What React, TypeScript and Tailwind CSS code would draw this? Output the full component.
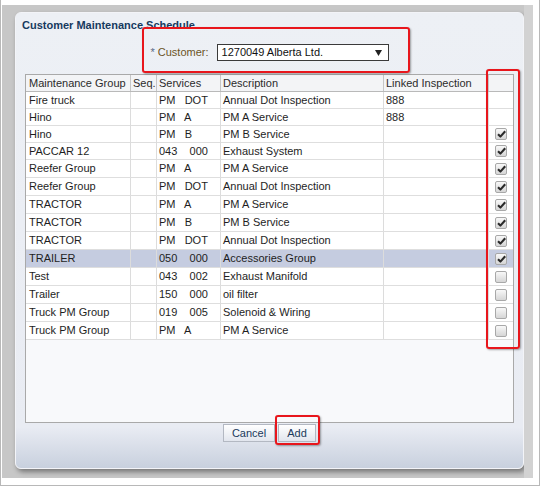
import React from 'react';

interface Row {
    group: string;
    svc: string;
    desc: string;
    linked?: string;
    check?: boolean;
    selected?: boolean;
}

const rows: Row[] = [
    { group: 'Fire truck', svc: 'PM   DOT', desc: 'Annual Dot Inspection', linked: '888' },
    { group: 'Hino', svc: 'PM   A', desc: 'PM A Service', linked: '888' },
    { group: 'Hino', svc: 'PM   B', desc: 'PM B Service', check: true },
    { group: 'PACCAR 12', svc: '043    000', desc: 'Exhaust System', check: true },
    { group: 'Reefer Group', svc: 'PM   A', desc: 'PM A Service', check: true },
    { group: 'Reefer Group', svc: 'PM   DOT', desc: 'Annual Dot Inspection', check: true },
    { group: 'TRACTOR', svc: 'PM   A', desc: 'PM A Service', check: true },
    { group: 'TRACTOR', svc: 'PM   B', desc: 'PM B Service', check: true },
    { group: 'TRACTOR', svc: 'PM   DOT', desc: 'Annual Dot Inspection', check: true },
    { group: 'TRAILER', svc: '050    000', desc: 'Accessories Group', check: true, selected: true },
    { group: 'Test', svc: '043    002', desc: 'Exhaust Manifold', check: false },
    { group: 'Trailer', svc: '150    000', desc: 'oil filter', check: false },
    { group: 'Truck PM Group', svc: '019    005', desc: 'Solenoid & Wiring', check: false },
    { group: 'Truck PM Group', svc: 'PM   A', desc: 'PM A Service', check: false },
];

function CheckBox({ on }: { on: boolean }) {
    return (
        <span className="flex h-[12px] w-[12px] items-center justify-center rounded-[2px] border border-[#a8a8a8] bg-linear-to-b from-[#f8f8f8] to-[#d6d6d6]">
            {on && (
                <svg width="9" height="8" viewBox="0 0 9 8">
                    <path d="M1 4.3 L3.4 6.6 L8.2 1.2" stroke="#2a2a2a" strokeWidth="2.1" fill="none" strokeLinejoin="round" />
                </svg>
            )}
        </span>
    );
}

function Annotation({ className }: { className: string }) {
    return <div className={`absolute rounded-[3px] border-2 border-[#e8161c] shadow-[1px_1px_2px_rgba(0,0,0,0.35)] ${className}`} />;
}

const cols = 'grid grid-cols-[105px_26px_64px_163px_105px_24px]';

export default function App() {
    return (
        <div className="relative h-[486px] w-[540px] border-x border-b border-[#b8b8b8] bg-white pb-[7px] pl-[1px] pr-[6px] pt-[5px] font-['Liberation_Sans',Arial,sans-serif] text-[11px] text-[#1e1e1e]">
            <div className="flex h-full bg-[#c7c7c7]">
                <div className="w-[13px]" />

                {/* dialog */}
                <div className="mt-[7px] flex h-[457px] w-[509px] flex-col rounded-[6px] border border-[#f3f4f8] bg-[linear-gradient(180deg,#edf0f5_0%,#e9ecf3_91%,#c8d0de_100%)] shadow-[2px_3px_5px_rgba(0,0,0,0.4)]">
                    <div className="pl-[6px] pt-[5px] text-[11px] font-bold leading-[14px] text-[#163a5f]">Customer Maintenance Schedule</div>

                    <div className="mt-[12px] flex h-[17px] items-center justify-center gap-[8px]">
                        <span className="text-[#6b5426]"><span className="text-[#5a6a86]">*</span> Customer:</span>
                        <div className="flex h-[17px] w-[172px] items-center justify-between border border-[#3a3a3a] bg-white pl-[4px] pr-[6px] text-[#111]">
                            <span>1270049 Alberta Ltd.</span>
                            <svg width="7" height="6" viewBox="0 0 7 6">
                                <path d="M0 0 H7 L3.5 6 Z" fill="#222" />
                            </svg>
                        </div>
                    </div>

                    <div className="ml-[9px] mt-[13px] flex h-[349px] w-[489px] flex-col border border-[#a9a9a9] bg-[#f8f9fb]">
                        <div className={`${cols} h-[17px] border-b border-[#b9b9b9] bg-[#f3f4f6] leading-[16px] text-[#2b2b2b]`}>
                            <div className="border-r border-[#c6c6c6] pl-[3px]">Maintenance Group</div>
                            <div className="overflow-hidden whitespace-nowrap border-r border-[#c6c6c6] pl-[2px]">Seq.</div>
                            <div className="border-r border-[#c6c6c6] pl-[2px]">Services</div>
                            <div className="border-r border-[#c6c6c6] pl-[2px]">Description</div>
                            <div className="border-r border-[#c6c6c6] pl-[2px]">Linked Inspection</div>
                            <div />
                        </div>
                        {rows.map((r, i) => (
                            <div
                                key={i}
                                className={`${cols} ${i < 4 ? 'h-[17px]' : 'h-[18px]'} border-b border-[#dedede] ${r.selected ? 'bg-[#c5cce0]' : 'bg-white'}`}
                            >
                                <div className="flex items-center border-r border-[#dcdcdc] pl-[3px]">{r.group}</div>
                                <div className="border-r border-[#dcdcdc]" />
                                <div className="flex items-center whitespace-pre border-r border-[#dcdcdc] pl-[2px]">{r.svc}</div>
                                <div className="flex items-center border-r border-[#dcdcdc] pl-[2px]">{r.desc}</div>
                                <div className="flex items-center border-r border-[#dcdcdc] pl-[2px]">{r.linked ?? ''}</div>
                                <div className="flex items-center justify-center">
                                    {r.check !== undefined && <CheckBox on={r.check} />}
                                </div>
                            </div>
                        ))}
                        <div className="flex-1" />
                    </div>

                    <div className="mt-[1px] flex justify-center gap-[3px]">
                        <button className="h-[18px] w-[52px] border border-[#b3b8c2] bg-linear-to-b from-white to-[#e2e6ee] leading-[16px] text-[#1a3a5c]">Cancel</button>
                        <button className="h-[18px] w-[38px] border border-[#b3b8c2] bg-linear-to-b from-white to-[#e2e6ee] leading-[16px] text-[#1a3a5c]">Add</button>
                    </div>
                </div>

                {/* page behind the overlay */}
                <div className="flex-1 bg-[#d2d2d2]" />
            </div>

            <Annotation className="left-[141px] top-[27px] h-[46px] w-[268px]" />
            <Annotation className="left-[485px] top-[69px] h-[280px] w-[34px]" />
            <Annotation className="left-[274px] top-[415px] h-[30px] w-[45px]" />
        </div>
    );
}
